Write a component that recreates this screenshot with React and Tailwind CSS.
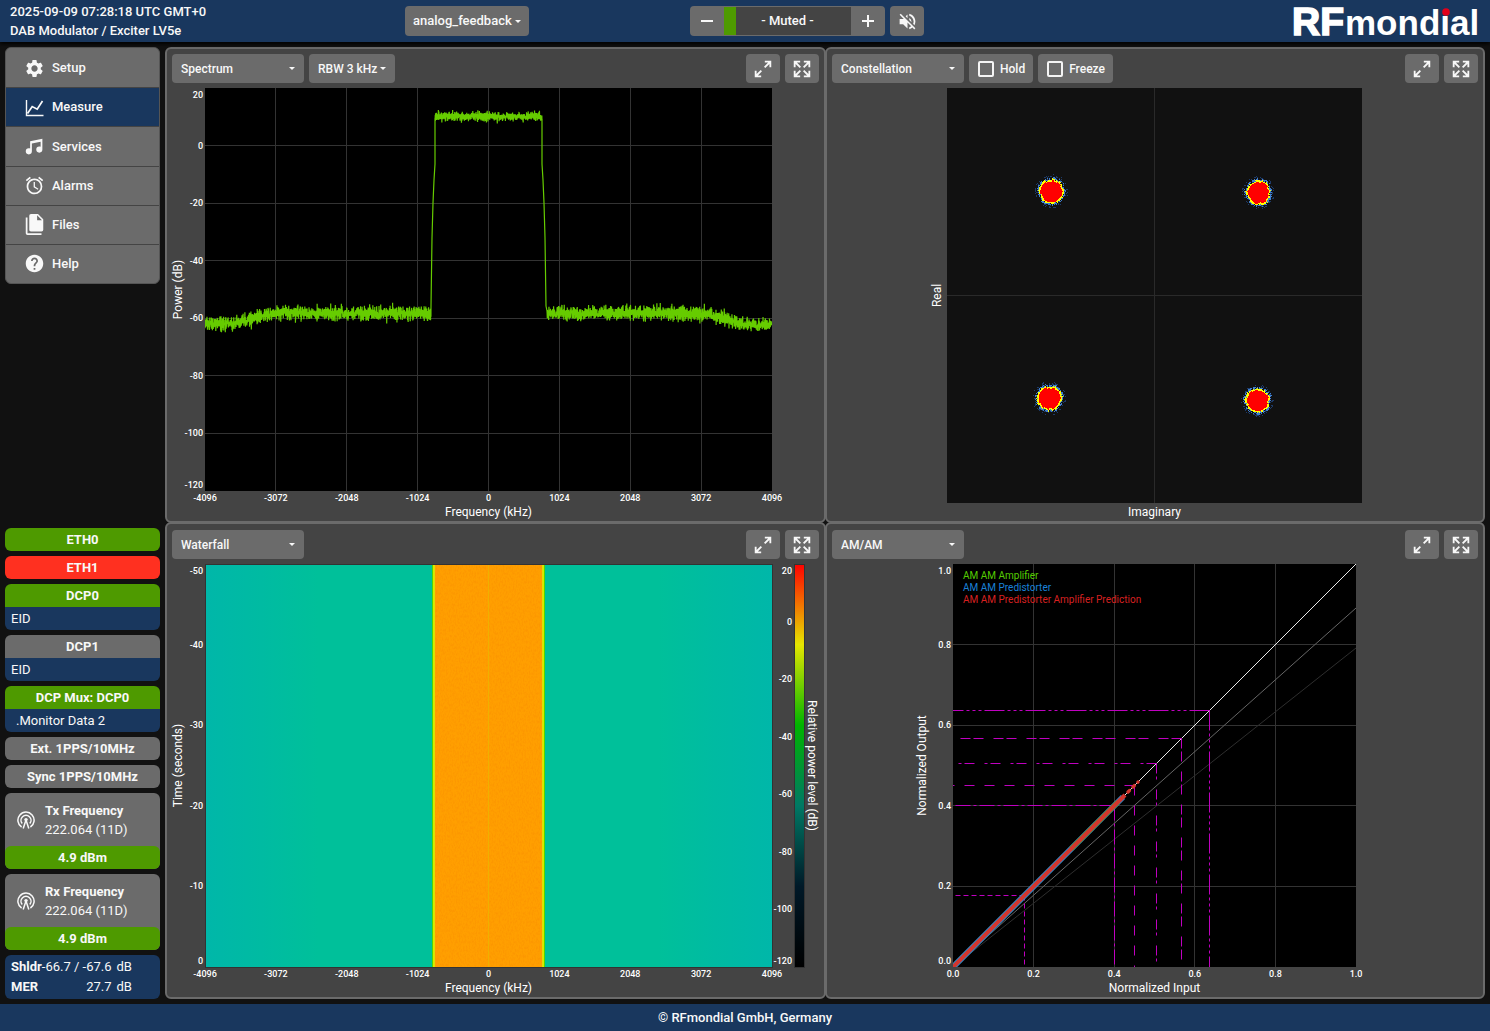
import React, { useState } from 'react'
import { MdAlarm, MdHelp, MdSettings, MdVolumeOff } from 'react-icons/md'

// small seeded generator so the traces look the same on every load
function makeRandom(seed) {
  let s = seed
  return () => {
    s = (s * 1664525 + 1013904223) % 4294967296
    return s / 4294967296
  }
}

function spectrumPath() {
  const rnd = makeRandom(7)
  const noise = () => rnd() + rnd() + rnd() + rnd() - 2
  const points = []
  const floorAt = (x) => {
    const edge = Math.min(x, 567 - x)
    if (edge < 30) return 236
    if (edge < 68) return 236 - ((edge - 30) / 38) * 11
    return 225
  }
  for (let x = 0; x < 226; x += 0.14) points.push([x, floorAt(x) + noise() * 6])
  points.push([226, 218], [227, 150], [228, 115], [229, 92], [230, 76], [230, 32])
  for (let x = 230; x < 337; x += 0.14) points.push([x, 28.5 + noise() * 4])
  points.push([337, 32], [337, 76], [338, 92], [339, 115], [340, 150], [341, 218])
  for (let x = 342; x <= 567; x += 0.14) points.push([x, floorAt(x) + noise() * 6])
  return 'M' + points.map(([x, y]) => `${x.toFixed(2)} ${y.toFixed(1)}`).join('L')
}

function cloudPixels(cx, cy, seed) {
  const rnd = makeRandom(seed)
  const paths = { red: '', yellow: '', blue: '', dim: '' }
  const ripple = Array.from({ length: 24 }, () => rnd() * 2 - 1)
  for (let y = -17; y <= 17; y++) {
    for (let x = -17; x <= 17; x++) {
      const angle = Math.floor(((Math.atan2(y, x) + Math.PI) / (Math.PI * 2)) * 23.9)
      const d = Math.hypot(x, y) + ripple[angle] * 0.9
      const cell = `M${cx + x} ${cy + y}h1v1h-1z`
      if (d < 10.6) paths.red += cell
      else if (d + rnd() * 1.4 < 12.8) paths.yellow += cell
      else if (d < 14 && rnd() < 0.55) paths.blue += cell
      else if (d < 16.5 && rnd() < 0.22) paths.dim += cell
    }
  }
  return paths
}

const SPECTRUM = spectrumPath()
const CLOUDS = [
  cloudPixels(104, 103, 11),
  cloudPixels(311, 104, 29),
  cloudPixels(102, 310, 43),
  cloudPixels(310, 312, 71),
]

const FREQUENCIES = ['-4096', '-3072', '-2048', '-1024', '0', '1024', '2048', '3072', '4096']
const POWERS = ['20', '0', '-20', '-40', '-60', '-80', '-100', '-120']
const SECONDS = ['-50', '-40', '-30', '-20', '-10', '0']
const UNITS = ['0.0', '0.2', '0.4', '0.6', '0.8', '1.0']

const MARKERS = [
  { at: 0.1775, dash: '5 3' },
  { at: 0.401, dash: '15 3 3 3' },
  { at: 0.4504, dash: '10 10' },
  { at: 0.505, dash: '10 3 3 10' },
  { at: 0.567, dash: '10 3 10 10' },
  { at: 0.636, dash: '20 3 3 3 3 3 3 3' },
]

function MdiIcon({ d, size = 21 }) {
  return (
    <svg width={size} height={size} viewBox="0 0 24 24" fill="currentColor" aria-hidden="true">
      <path d={d} />
    </svg>
  )
}

const MUSIC =
  'M21,3V15.5A3.5,3.5 0 0,1 17.5,19A3.5,3.5 0 0,1 14,15.5A3.5,3.5 0 0,1 17.5,12C18.04,12 18.55,12.12 19,12.34V6.47L9,8.6V17.5A3.5,3.5 0 0,1 5.5,21A3.5,3.5 0 0,1 2,17.5A3.5,3.5 0 0,1 5.5,14C6.04,14 6.55,14.12 7,14.34V6L21,3Z'
const FILES =
  'M15,7H20.5L15,1.5V7M8,0H16L22,6V18A2,2 0 0,1 20,20H8C6.89,20 6,19.1 6,18V2A2,2 0 0,1 8,0M4,4V22H20V24H4A2,2 0 0,1 2,22V4H4Z'
const EXPAND =
  'M10,21V19H6.41L10.91,14.5L9.5,13.09L5,17.59V14H3V21H10M14.5,10.91L19,6.41V10H21V3H14V5H17.59L13.09,9.5L14.5,10.91Z'
const EXPAND_ALL =
  'M9.5,13.09L10.91,14.5L6.41,19H10V21H3V14H5V17.59L9.5,13.09M10.91,9.5L9.5,10.91L5,6.41V10H3V3H10V5H6.41L10.91,9.5M14.5,13.09L19,17.59V14H21V21H14V19H17.59L13.09,14.5L14.5,13.09M13.09,9.5L17.59,5H14V3H21V10H19V6.41L14.5,10.91L13.09,9.5Z'

function MeasureIcon() {
  return (
    <svg width="21" height="21" viewBox="0 0 21 21" fill="none" stroke="currentColor" aria-hidden="true">
      <path d="M2.5 3V18.5H19.5" strokeWidth="1.4" />
      <path d="M3.5 16.5L8.2 9.5L13.2 12.2L18.5 4" strokeWidth="1.7" />
    </svg>
  )
}

function AntennaIcon() {
  return (
    <svg width="18" height="18" viewBox="0 0 18 18" fill="none" stroke="currentColor" strokeWidth="1.5" aria-hidden="true">
      <path d="M4.6 16A8.1 8.1 0 1 1 13.4 16" />
      <path d="M5.2 12.6A5 5 0 1 1 12.8 12.6" />
      <circle cx="9" cy="8.6" r="1.7" fill="currentColor" stroke="none" />
      <path d="M9 9L6.2 17.5M9 9L11.8 17.5" />
    </svg>
  )
}

function Caret() {
  return (
    <svg width="6" height="3" viewBox="0 0 6 3" fill="currentColor" aria-hidden="true">
      <path d="M0 0H6L3 3Z" />
    </svg>
  )
}

function Logo() {
  return (
    <svg width="190" height="42" role="img" aria-label="RFmondial">
      <text x="0" y="35" fontSize="39" fontWeight="700" fill="#fff" stroke="#fff" strokeWidth="1.6" fontFamily="'Liberation Sans', Arial, sans-serif">
        RF
      </text>
      <text x="53" y="35" fontSize="35" fontWeight="700" fill="#fff" fontFamily="'Liberation Sans', Arial, sans-serif">
        mondial
      </text>
      <rect x="150" y="8" width="8" height="7" fill="#19375e" />
      <circle cx="154" cy="12" r="3.8" fill="#e2001a" />
    </svg>
  )
}

function Select({ label, value, width }) {
  return (
    <div className={`relative h-full ${width}`}>
      <select
        aria-label={label}
        defaultValue={value}
        className="h-full w-full appearance-none rounded bg-[#6b6b6b] px-[9px] text-xs font-medium text-[#f8f8f8]"
      >
        <option>{value}</option>
      </select>
      <span className="pointer-events-none absolute inset-y-0 right-[9px] flex items-center">
        <Caret />
      </span>
    </div>
  )
}

function Toggle({ label }) {
  const [on, setOn] = useState(false)
  return (
    <label className="flex h-full items-center gap-[6px] rounded bg-[#6b6b6b] pr-2 pl-[9px] text-xs font-medium">
      <input
        type="checkbox"
        checked={on}
        onChange={(e) => setOn(e.target.checked)}
        className="size-4 appearance-none rounded-[2px] border-2 border-[#f4f4f4] checked:bg-[#f4f4f4]"
      />
      {label}
    </label>
  )
}

function ToolButton({ label, icon }) {
  return (
    <button aria-label={label} className="flex h-full w-[34px] items-center justify-center rounded bg-[#6b6b6b]">
      <MdiIcon d={icon} size={22} />
    </button>
  )
}

function Panel({ view, tools, overlap, children }) {
  return (
    <section className={`flex min-h-0 min-w-0 flex-col gap-[5px] rounded-md border-2 border-[#6b6b6b] bg-[#444] p-[5px] ${overlap}`}>
      <div className="flex h-[29px] shrink-0 gap-[5px]">
        <Select label="View" value={view} width="w-[132px]" />
        {tools}
        <div className="ml-auto flex gap-[5px]">
          <ToolButton label="Expand" icon={EXPAND} />
          <ToolButton label="Full screen" icon={EXPAND_ALL} />
        </div>
      </div>
      {children}
    </section>
  )
}

// Tick labels and grid lines are placed in percent so they follow the plot's size
function XTicks({ values }) {
  return values.map((v, i) => (
    <text key={v} x={`${(i / (values.length - 1)) * 100}%`} y="100%" dy="10" textAnchor="middle" className="fill-white text-[9px] font-medium">
      {v}
    </text>
  ))
}

function YTicks({ values, x = -2 }) {
  const last = values.length - 1
  return values.map((v, i) => (
    <text
      key={v}
      x={x}
      y={`${(i / last) * 100}%`}
      dy={i === 0 ? 10 : i === last ? -3 : 3}
      textAnchor="end"
      className="fill-white text-[9px] font-medium"
    >
      {v}
    </text>
  ))
}

function Grid({ cols, rows }) {
  return (
    <g stroke="#333" shapeRendering="crispEdges">
      {Array.from({ length: cols - 1 }, (_, i) => (
        <line key={'c' + i} x1={`${((i + 1) / cols) * 100}%`} x2={`${((i + 1) / cols) * 100}%`} y1="0" y2="100%" />
      ))}
      {Array.from({ length: rows - 1 }, (_, i) => (
        <line key={'r' + i} x1="0" x2="100%" y1={`${((i + 1) / rows) * 100}%`} y2={`${((i + 1) / rows) * 100}%`} />
      ))}
    </g>
  )
}

function XTitle({ children, dy = 25 }) {
  return (
    <text x="50%" y="100%" dy={dy} textAnchor="middle" className="fill-white text-xs">
      {children}
    </text>
  )
}

function YTitle({ x, children }) {
  return (
    <svg x={x} y="50%" overflow="visible">
      <text transform="rotate(-90)" textAnchor="middle" className="fill-white text-xs">
        {children}
      </text>
    </svg>
  )
}

function SpectrumPlot() {
  return (
    <div className="min-h-0 flex-1 pr-[47px] pb-[25px] pl-[33px]">
      <svg className="h-full w-full overflow-visible" role="img" aria-label="Spectrum">
        <rect width="100%" height="100%" fill="#000" />
        <Grid cols={8} rows={7} />
        <svg width="100%" height="100%" viewBox="0 0 567 403" preserveAspectRatio="none">
          <path d={SPECTRUM} fill="none" stroke="#66cc00" strokeWidth="1.2" strokeLinejoin="bevel" vectorEffect="non-scaling-stroke" />
        </svg>
        <YTicks values={POWERS} />
        <XTicks values={FREQUENCIES} />
        <XTitle>Frequency (kHz)</XTitle>
        <YTitle x="-23">Power (dB)</YTitle>
      </svg>
    </div>
  )
}

function WaterfallPlot() {
  return (
    <div className="flex min-h-0 flex-1 gap-[22px] pr-[15px] pb-[25px] pl-[33px]">
      <svg className="h-full min-w-0 flex-1 overflow-visible" role="img" aria-label="Waterfall">
        <defs>
          <linearGradient id="floor">
            <stop offset="0" stopColor="#00b7a9" />
            <stop offset="0.1" stopColor="#00bba2" />
            <stop offset="0.2" stopColor="#00c09a" />
            <stop offset="0.8" stopColor="#00c09a" />
            <stop offset="0.9" stopColor="#00bba2" />
            <stop offset="1" stopColor="#00b7a9" />
          </linearGradient>
          <filter id="grain" x="0" y="0" width="100%" height="100%">
            <feTurbulence type="fractalNoise" baseFrequency="0.7 0.35" numOctaves="2" seed="4" />
            <feColorMatrix values="0 0 0 0 0.9  0 0 0 0 0.2  0 0 0 0 0  0 3 0 0 -1.2" />
          </filter>
        </defs>
        <rect width="100%" height="100%" fill="url(#floor)" />
        <svg width="100%" height="100%" viewBox="0 0 567 403" preserveAspectRatio="none" shapeRendering="crispEdges">
          <rect x="227" width="113" height="403" fill="#4fd800" />
          <rect x="228" width="111" height="403" fill="#d8e600" />
          <rect x="230" width="107" height="403" fill="#ff9f00" />
          <rect x="230" width="107" height="403" filter="url(#grain)" opacity="0.2" />
          <rect x="283" width="1" height="403" fill="#efb000" />
        </svg>
        <rect width="100%" height="100%" fill="none" stroke="#333" shapeRendering="crispEdges" />
        <YTicks values={SECONDS} />
        <XTicks values={FREQUENCIES} />
        <XTitle>Frequency (kHz)</XTitle>
        <YTitle x="-23">Time (seconds)</YTitle>
      </svg>
      <svg className="h-full w-[10px] shrink-0 overflow-visible" role="img" aria-label="Relative power level">
        <defs>
          <linearGradient id="levels" x2="0" y2="1">
            <stop offset="0" stopColor="#ff0000" />
            <stop offset="0.2" stopColor="#e6e600" />
            <stop offset="0.4" stopColor="#00b400" />
            <stop offset="0.6" stopColor="#007864" />
            <stop offset="0.8" stopColor="#001928" />
            <stop offset="1" stopColor="#000" />
          </linearGradient>
        </defs>
        <rect width="100%" height="100%" fill="url(#levels)" stroke="#333" shapeRendering="crispEdges" />
        <YTicks values={POWERS} />
        <svg x="14" y="50%" overflow="visible">
          <text transform="rotate(90)" textAnchor="middle" className="fill-white text-xs">
            Relative power level (dB)
          </text>
        </svg>
      </svg>
    </div>
  )
}

function ConstellationPlot() {
  return (
    <div className="flex min-h-0 flex-1 justify-center pr-0.5 pb-[13px]">
      <svg className="aspect-square h-full overflow-visible" role="img" aria-label="Constellation">
        <rect width="100%" height="100%" fill="#111" />
        <g stroke="#2a2a2a" shapeRendering="crispEdges">
          <line x1="50%" x2="50%" y1="0" y2="100%" />
          <line x1="0" x2="100%" y1="50%" y2="50%" />
        </g>
        <svg width="100%" height="100%" viewBox="0 0 415 415" shapeRendering="crispEdges">
          {CLOUDS.map((cloud, i) => (
            <g key={i}>
              <path d={cloud.dim} fill="#1d3a68" />
              <path d={cloud.blue} fill="#3f7fd0" />
              <path d={cloud.yellow} fill="#ffff00" />
              <path d={cloud.red} fill="#ff0000" />
            </g>
          ))}
        </svg>
        <XTitle dy={13}>Imaginary</XTitle>
        <YTitle x="-6">Real</YTitle>
      </svg>
    </div>
  )
}

function AmAmPlot() {
  return (
    <div className="flex min-h-0 flex-1 justify-center pr-0.5 pb-[25px]">
      <svg className="aspect-square h-full overflow-visible" role="img" aria-label="AM/AM">
        <rect width="100%" height="100%" fill="#000" />
        <Grid cols={5} rows={5} />
        <svg width="100%" height="100%" viewBox="0 0 403 403" fill="none">
          <path d="M0 403L403 84" stroke="#2e2e2e" />
          <path d="M0 403L403 44" stroke="#666" />
          <path d="M0 403L403 0" stroke="#e8e8e8" />
          <g stroke="#c000c0">
            {MARKERS.map(({ at, dash }) => {
              const x = Math.floor(at * 403) + 0.5
              const y = 403 - x
              return (
                <g key={at} strokeDasharray={dash}>
                  <path d={`M${x} ${y}H0`} />
                  <path d={`M${x} ${y}V403`} />
                </g>
              )
            })}
          </g>
          <path d="M1 402L170 233" stroke="#2f86c0" strokeWidth="6" />
          <path d="M118 285L165 238" stroke="#4f9a28" strokeWidth="5" />
          <path d="M0 403L172 231" stroke="#d2362e" strokeWidth="4" />
          <path d="M175 228L185 218" stroke="#d2362e" strokeWidth="3.4" strokeLinecap="round" strokeDasharray="2 5" />
        </svg>
        <g className="text-[10px]">
          <text x="10" y="15" fill="#55cc00">AM AM Amplifier</text>
          <text x="10" y="27" fill="#1a80d8">AM AM Predistorter</text>
          <text x="10" y="39" fill="#d82020">AM AM Predistorter Amplifier Prediction</text>
        </g>
        <YTicks values={[...UNITS].reverse()} />
        <XTicks values={UNITS} />
        <XTitle>Normalized Input</XTitle>
        <YTitle x="-27">Normalized Output</YTitle>
      </svg>
    </div>
  )
}

const NAV = [
  { label: 'Setup', icon: <MdSettings size={21} /> },
  { label: 'Measure', icon: <MeasureIcon />, active: true },
  { label: 'Services', icon: <MdiIcon d={MUSIC} /> },
  { label: 'Alarms', icon: <MdAlarm size={21} /> },
  { label: 'Files', icon: <MdiIcon d={FILES} /> },
  { label: 'Help', icon: <MdHelp size={21} /> },
]

function Nav() {
  return (
    <nav className="grid h-[237px] grid-rows-6 overflow-hidden rounded-md border border-[#555] bg-[#6b6b6b]">
      {NAV.map(({ label, icon, active }) => (
        <a
          key={label}
          href="#"
          className={`flex items-center gap-[7px] border-t border-[#444] pl-[18px] text-[13px] font-medium first:border-[#6b6b6b] ${active ? 'bg-[#19375e]' : ''}`}
        >
          {icon}
          {label}
        </a>
      ))}
    </nav>
  )
}

function Status({ title, color, children }) {
  return (
    <div className="overflow-hidden rounded-md">
      <div className={`h-[23px] text-center text-[13px] leading-[23px] font-bold ${color}`}>{title}</div>
      {children && <div className="h-[23px] bg-[#19375e] px-[6px] text-[13px] leading-[23px] whitespace-pre">{children}</div>}
    </div>
  )
}

function Frequency({ title, value, level }) {
  return (
    <div className="rounded-md bg-[#6b6b6b]">
      <div className="flex h-[53px] items-center gap-[10px] pl-3">
        <AntennaIcon />
        <div className="text-[13px] leading-[19px]">
          <div className="font-bold">{title}</div>
          <div>{value}</div>
        </div>
      </div>
      <div className="h-[23px] rounded-md bg-[#4e9a00] text-center text-[13px] leading-[23px] font-bold">{level}</div>
    </div>
  )
}

function Header() {
  return (
    <header className="z-10 flex h-[42px] shrink-0 items-center bg-[#19375e] pr-2 pl-[10px] shadow-[0_2px_4px_#000]">
      <div className="w-[395px] text-[13px] leading-[19px] font-medium whitespace-nowrap">
        <div>2025-09-09 07:28:18 UTC GMT+0</div>
        <div>DAB Modulator / Exciter LV5e</div>
      </div>
      <div className="w-[285px]">
        <button className="flex h-[30px] items-center gap-[3px] rounded bg-[#6b6b6b] px-2 text-[13px] font-medium">
          analog_feedback
          <Caret />
        </button>
      </div>
      <div className="flex gap-[5px]">
        <div className="flex h-[30px] overflow-hidden rounded bg-[#6b6b6b]">
          <button aria-label="Volume down" className="flex w-[34px] items-center justify-center">
            <svg width="12" height="12" stroke="currentColor" strokeWidth="2" aria-hidden="true">
              <path d="M0 6H12" />
            </svg>
          </button>
          <div className="my-px flex w-[127px] items-center bg-[#444]">
            <span className="h-full w-3 bg-[#4e9a00]" />
            <span className="flex-1 pr-3 text-center text-[13px] font-medium">- Muted -</span>
          </div>
          <button aria-label="Volume up" className="flex w-[34px] items-center justify-center">
            <svg width="12" height="12" stroke="currentColor" strokeWidth="2" aria-hidden="true">
              <path d="M0 6H12M6 0V12" />
            </svg>
          </button>
        </div>
        <button aria-label="Unmute" className="flex h-[30px] w-[34px] items-center justify-center rounded bg-[#6b6b6b]">
          <MdVolumeOff size={21} />
        </button>
      </div>
      <div className="ml-auto">
        <Logo />
      </div>
    </header>
  )
}

function App() {
  return (
    <div className="flex h-screen min-h-[860px] flex-col bg-[#111] font-[Roboto,sans-serif] text-[#f8f8f8]">
      <Header />
      <main className="flex min-h-0 flex-1 gap-[5px] p-[5px]">
        <aside className="flex w-[155px] shrink-0 flex-col justify-between">
          <Nav />
          <div className="flex flex-col gap-[5px]">
            <Status title="ETH0" color="bg-[#4e9a00]" />
            <Status title="ETH1" color="bg-[#ff3020]" />
            <Status title="DCP0" color="bg-[#4e9a00]">EID</Status>
            <Status title="DCP1" color="bg-[#6b6b6b]">EID</Status>
            <Status title="DCP Mux: DCP0" color="bg-[#4e9a00]">
              <span className="pl-[5px]">.Monitor Data 2</span>
            </Status>
            <Status title="Ext. 1PPS/10MHz" color="bg-[#6b6b6b]" />
            <Status title="Sync 1PPS/10MHz" color="bg-[#6b6b6b]" />
            <Frequency title="Tx Frequency" value="222.064 (11D)" level="4.9 dBm" />
            <Frequency title="Rx Frequency" value="222.064 (11D)" level="4.9 dBm" />
            <div className="rounded-md bg-[#19375e] px-[6px] py-[2px]">
              <table className="text-[13px] leading-5">
                <tbody>
                  <tr>
                    <th className="text-left font-bold">Shldr</th>
                    <td className="text-right">-66.7 / -67.6</td>
                    <td className="pl-[5px]">dB</td>
                  </tr>
                  <tr>
                    <th className="text-left font-bold">MER</th>
                    <td className="text-right">27.7</td>
                    <td className="pl-[5px]">dB</td>
                  </tr>
                </tbody>
              </table>
            </div>
          </div>
        </aside>
        <div className="grid min-w-0 flex-1 grid-cols-2 grid-rows-2">
          <Panel view="Spectrum" overlap="-mr-px" tools={<Select label="Resolution bandwidth" value="RBW 3 kHz" width="w-[86px]" />}>
            <SpectrumPlot />
          </Panel>
          <Panel
            view="Constellation"
            overlap=""
            tools={
              <>
                <Toggle label="Hold" />
                <Toggle label="Freeze" />
              </>
            }
          >
            <ConstellationPlot />
          </Panel>
          <Panel view="Waterfall" overlap="-mt-px -mr-px pt-[6px]">
            <WaterfallPlot />
          </Panel>
          <Panel view="AM/AM" overlap="-mt-px pt-[6px]">
            <AmAmPlot />
          </Panel>
        </div>
      </main>
      <footer className="flex h-[27px] shrink-0 items-center justify-center bg-[#19375e] text-[13px] font-medium">
        © RFmondial GmbH, Germany
      </footer>
    </div>
  )
}

export default App
